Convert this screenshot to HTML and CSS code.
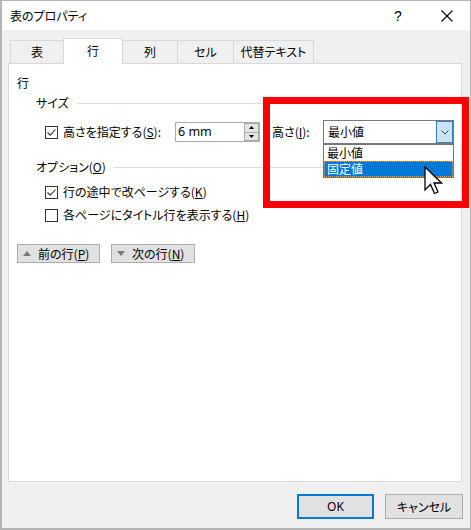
FILE: index.html
```html
<!DOCTYPE html>
<html lang="ja">
<head>
<meta charset="utf-8">
<title>表のプロパティ</title>
<link rel="stylesheet" href="styles.css">
</head>
<body>
<div class="window">
  <div class="titlebar">
    <span class="title">表のプロパティ</span>
    <span class="help">?</span>
    <span class="close"><svg width="12" height="12" viewBox="0 0 12 12"><path d="M0.5 0.5 L11.5 11.5 M11.5 0.5 L0.5 11.5" stroke="#000" stroke-width="1.1" fill="none"/></svg></span>
  </div>
  <div class="body">
    <div class="tabs">
      <div class="tab w1">表</div>
      <div class="tab active w2">行</div>
      <div class="tab w3">列</div>
      <div class="tab w4">セル</div>
      <div class="tab w5">代替テキスト</div>
    </div>
    <div class="panel">
      <div class="section-title">行</div>
      <div class="group-head"><span>サイズ</span><span class="rule"></span></div>
      <div class="size-row">
        <label class="check size-check">
          <svg class="box" width="13" height="13" viewBox="0 0 13 13"><rect x="0.5" y="0.5" width="12" height="12" fill="#fff" stroke="#333"/><path d="M2.5 6.5 L5.2 9.2 L10.5 3.5" stroke="#333" stroke-width="1.1" fill="none"/></svg>
          <span>高さを指定する(<u>S</u>):</span>
        </label>
        <div class="spin">
          <span class="spin-val">6 mm</span>
          <div class="spin-btns">
            <span class="sbtn"><svg width="5" height="3" viewBox="0 0 5 3"><path d="M0 3 L2.5 0 L5 3 Z" fill="#000"/></svg></span>
            <span class="sbtn"><svg width="5" height="3" viewBox="0 0 5 3"><path d="M0 0 L2.5 3 L5 0 Z" fill="#000"/></svg></span>
          </div>
        </div>
        <span class="hlabel">高さ(<u>I</u>):</span>
        <div class="select">
          <span class="select-val">最小値</span>
          <span class="drop-btn"><svg width="8" height="5" viewBox="0 0 8 5"><path d="M0.5 0.5 L4 4 L7.5 0.5" stroke="#444" stroke-width="1" fill="none"/></svg></span>
          <div class="droplist">
            <div class="item">最小値</div>
            <div class="item selected">固定値</div>
          </div>
        </div>
      </div>
      <div class="group-head opt-head"><span>オプション(<u>O</u>)</span><span class="rule"></span></div>
      <label class="check opt1">
        <svg class="box" width="13" height="13" viewBox="0 0 13 13"><rect x="0.5" y="0.5" width="12" height="12" fill="#fff" stroke="#333"/><path d="M2.5 6.5 L5.2 9.2 L10.5 3.5" stroke="#333" stroke-width="1.1" fill="none"/></svg>
        <span>行の途中で改ページする(<u>K</u>)</span>
      </label>
      <label class="check opt2">
        <svg class="box" width="13" height="13" viewBox="0 0 13 13"><rect x="0.5" y="0.5" width="12" height="12" fill="#fff" stroke="#333"/></svg>
        <span>各ページにタイトル行を表示する(<u>H</u>)</span>
      </label>
      <div class="nav">
        <button class="navbtn prev"><svg width="8" height="5" viewBox="0 0 8 5"><path d="M0 5 L4 0 L8 5 Z" fill="#7a7a7a"/></svg><span>前の行(<u>P</u>)</span></button>
        <button class="navbtn next"><svg width="8" height="5" viewBox="0 0 8 5"><path d="M0 0 L4 5 L8 0 Z" fill="#7a7a7a"/></svg><span>次の行(<u>N</u>)</span></button>
      </div>
    </div>
    <div class="footer">
      <button class="btn ok">OK</button>
      <button class="btn cancel">キャンセル</button>
    </div>
  </div>
  <div class="redbox"></div>
  <svg class="cursor" width="19" height="29" viewBox="0 0 19 29"><path d="M1 1 L1 24 L6.5 18.5 L10.5 27.5 L14 26 L10 17 L17.5 17 Z" fill="#fff" stroke="#000" stroke-width="1.3" stroke-linejoin="miter"/></svg>
</div>
</body>
</html>
```

FILE: styles.css
```css
* { box-sizing: border-box; }
html, body { margin: 0; padding: 0; }
body {
  font-family: "Noto Sans CJK JP", "Noto Sans", sans-serif;
  font-size: 12px;
  font-feature-settings: "palt";
  color: #000;
  background: #fff;
}
u { text-decoration: underline; text-underline-offset: 1px; }

.window {
  position: relative;
  width: 471px;
  height: 530px;
  border: 1px solid #b4b4b4;
  border-left-width: 2px;
  border-bottom-width: 2px;
  background: #f0f0f0;
  display: flex;
  flex-direction: column;
}

.titlebar {
  height: 29px;
  background: #fff;
  display: flex;
  align-items: center;
  padding-left: 8px;
  flex: none;
}
.title { flex: 1; line-height: 16px; }
.help { font-family: "Liberation Sans", sans-serif; font-size: 14px; width: 14px; margin-right: 36px; text-align: center; }
.close { width: 12px; height: 12px; display: flex; margin-right: 17px; }

.body {
  padding: 8px 7px 0 6px;
  display: flex;
  flex-direction: column;
}

.tabs {
  display: flex;
  align-items: flex-end;
  height: 26px;
  margin-bottom: -1px;
  padding-left: 2px;
  position: relative;
  z-index: 1;
}
.tab {
  height: 23px;
  margin-bottom: 1px;
  border: 1px solid #d9d9d9;
  border-bottom: none;
  margin-left: -1px;
  background: #f0f0f0;
  display: flex;
  align-items: center;
  justify-content: center;
  line-height: 16px;
}
.tab.active {
  height: 26px;
  margin-bottom: 0;
  background: #fff;
  padding-bottom: 2px;
}
.w1 { width: 54px; margin-left: 0; }
.w2 { width: 60px; }
.w3 { width: 56px; }
.w4 { width: 57px; }
.w5 { width: 81px; }

.panel {
  height: 419px;
  margin-right: 1px;
  background: #fff;
  border: 1px solid #d9d9d9;
  padding: 11px 9px 0 8px;
  display: flex;
  flex-direction: column;
}
.section-title { line-height: 16px; height: 16px; }
.group-head {
  display: flex;
  align-items: center;
  height: 16px;
  line-height: 16px;
  padding-left: 19px;
  margin-top: 4px;
}
.group-head .rule { flex: 1; height: 1px; background: #dcdcdc; margin-left: 8px; }
.opt-head { margin-top: 15px; }

.size-row {
  display: flex;
  align-items: center;
  height: 24px;
  margin-top: 9px;
  padding-left: 28px;
}
.check {
  display: flex;
  align-items: center;
  height: 20px;
  line-height: 16px;
}
.check .box { flex: none; margin-right: 5px; }
.size-check { width: 130px; flex: none; }
.opt1 { margin-top: 7px; padding-left: 28px; }
.opt2 { margin-top: 3px; padding-left: 28px; }

.spin {
  width: 85px;
  height: 20px;
  border: 1px solid #abadb3;
  display: flex;
  align-items: center;
  flex: none;
  position: relative;
}
.spin-val { flex: 1; padding-left: 2px; font-family: "Noto Sans", sans-serif; font-size: 12.5px; line-height: 16px; }
.spin-btns {
  width: 15px;
  height: 18px;
  display: flex;
  flex-direction: column;
}
.sbtn {
  flex: 1;
  background: #e5e5e5;
  border: 1px solid #acacac;
  display: flex;
  align-items: center;
  justify-content: center;
}
.sbtn + .sbtn { border-top: none; }

.hlabel { margin-left: 12px; width: 51px; line-height: 16px; flex: none; }

.select {
  position: relative;
  width: 131px;
  height: 24px;
  border: 1px solid #7a7a7a;
  display: flex;
  align-items: center;
  flex: none;
}
.select-val { flex: 1; padding-left: 4px; line-height: 16px; }
.drop-btn {
  width: 17px;
  height: 22px;
  background: #cce4f7;
  border: 1px solid #3c7fb1;
  display: flex;
  align-items: center;
  justify-content: center;
}
.droplist {
  position: absolute;
  left: -1px;
  right: -1px;
  top: 23px;
  height: 34px;
  background: #fff;
  border: 1px solid #767676;
  z-index: 2;
}
.item { height: 16px; line-height: 16px; padding-left: 3px; }
.item.selected {
  background: #0078d7;
  color: #fff;
  border: 1px dotted #e7a25a;
  padding-left: 2px;
  line-height: 14px;
}

.nav {
  display: flex;
  gap: 11px;
  margin-top: 19px;
}
.navbtn {
  height: 19px;
  background: #e1e1e1;
  border: 1px solid #adadad;
  font: inherit;
  color: #000;
  display: flex;
  align-items: center;
  padding: 0 0 0 5px;
  line-height: 16px;
}
.navbtn svg { margin-right: 7px; }
.prev { width: 83px; }
.next { width: 84px; }

.footer {
  display: flex;
  justify-content: flex-end;
  gap: 11px;
  margin-top: 12px;
}
.btn {
  height: 25px;
  background: #e1e1e1;
  border: 1px solid #adadad;
  font: inherit;
  color: #000;
  line-height: 16px;
  padding: 0;
}
.btn.ok { width: 77px; border-color: #0078d7; box-shadow: inset 0 0 0 1px #0078d7; font-family: "Noto Sans", sans-serif; }
.btn.cancel { width: 78px; }

.redbox {
  position: absolute;
  left: 261px;
  top: 96px;
  width: 206px;
  height: 111px;
  border: 7px solid #ff0000;
  z-index: 3;
}
.cursor {
  position: absolute;
  left: 422px;
  top: 165px;
  z-index: 4;
}
```
